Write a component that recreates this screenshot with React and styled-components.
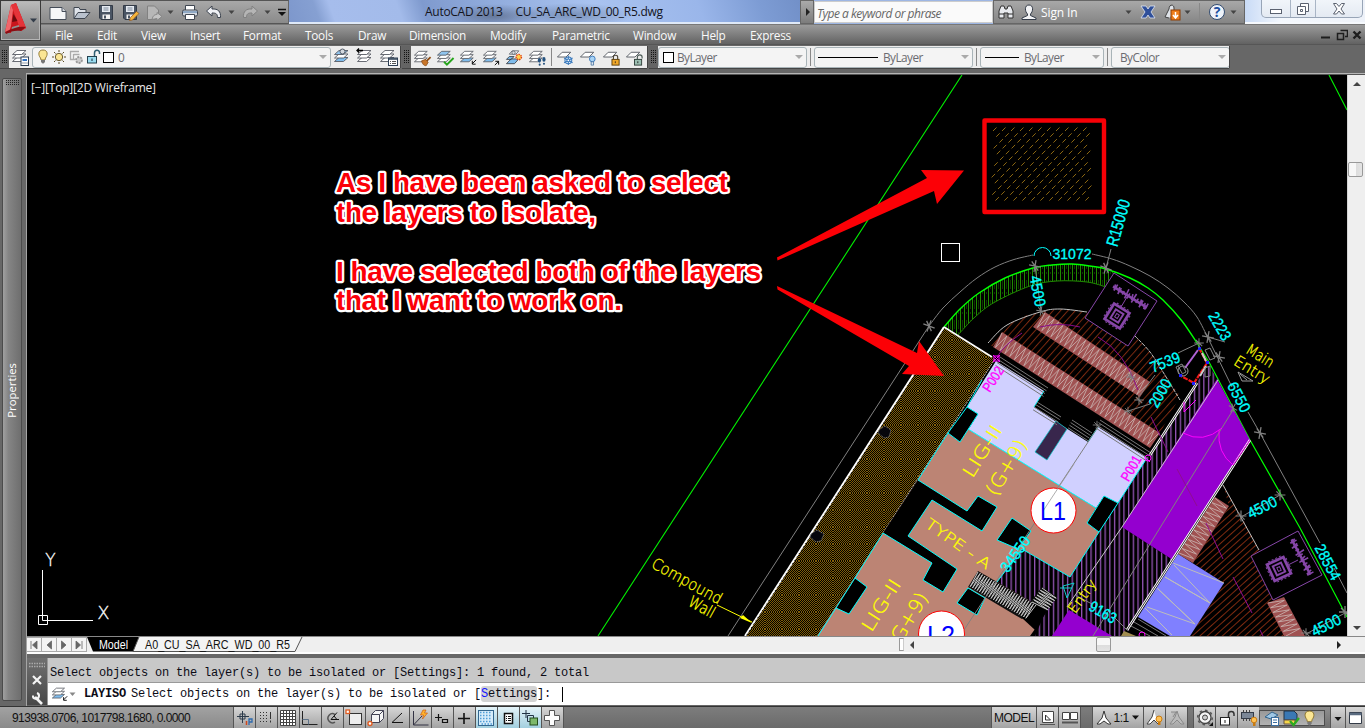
import React from "react";
import styled, { createGlobalStyle, css } from "styled-components";

const Global = createGlobalStyle`
  * { box-sizing: border-box; }
  html, body { margin: 0; padding: 0; overflow: hidden; background: #676767; }
  svg { display: block; flex: none; }
`;
const UI = `"Open Sans", "Noto Sans", sans-serif`;

const Window = styled.div`
  width: 1365px; height: 728px; display: flex; flex-direction: column;
  font-family: ${UI}; font-size: 12px; color: #222; background: #676767; overflow: hidden;
`;

/* ---------- header ---------- */
const Header = styled.header`
  height: 45px; display: grid; grid-template-columns: 41px 1fr; grid-template-rows: 24px 21px;
  background: linear-gradient(#555 24px, #9b9b9b 25px, #626262 44px, #4a4a4a 45px);
`;
const AppButton = styled.div`
  grid-row: 1 / 3; width: 41px; height: 41px; border: 1px solid #3a3a3a; box-shadow: inset 0 0 0 1px #b5b5b5;
  background: linear-gradient(#bcbcbc, #989898 50%, #808080); display: flex;
`;
const TitleBar = styled.div`display: flex; height: 24px; background: #9db6e4;`;
const QuickAccess = styled.div`
  width: 248px; height: 24px; display: flex; align-items: center; padding-left: 5px;
  background: linear-gradient(#a8a8a8, #8a8a8a); border-top: 1px solid #555; border-right: 1px solid #666; border-bottom: 1px solid #555;
`;
const Slot = styled.div`
  width: ${(p) => p.$w || 23}px; height: 100%; display: flex; align-items: center; justify-content: center; flex: none;
`;
const TitleText = styled.div`
  width: 511px; height: 24px; display: flex; align-items: center; padding-left: 136px; gap: 13px; white-space: pre;
  color: #14141c; font-size: 12px; letter-spacing: -0.28px; border-bottom: 2px solid #dfe9f8;
  background:
    radial-gradient(ellipse 50px 12px at 205px 16px, rgba(60,70,90,.5), transparent),
    radial-gradient(ellipse 60px 12px at 285px 15px, rgba(60,80,110,.4), transparent),
    linear-gradient(70deg, #7d97cc 0, #86a0d2 6%, #a6bdec 9%, #a3bbea 22%, #7f9ace 27%, #90abdc 40%, #a9c3f0 60%, #9ab6ea 80%, #7d9cd4 92%, #7290c8);
`;
const SearchToggle = styled.div`
  width: 14px; display: flex; align-items: center; justify-content: center; padding-left: 1px;
  background: linear-gradient(#aaa, #7c7c7c); border: 1px solid #666;
`;
const SearchBox = styled.div`
  width: 179px; height: 22px; margin-top: 1px; background: #fafafa; color: #666; font-style: italic; padding: 2px 0 0 2px;
  display: flex; align-items: center; letter-spacing: -0.5px; border: 1px solid #ccc; white-space: nowrap;
`;
const InfoCenter = styled.div`
  width: 252px; display: flex; align-items: center; color: #fff; background: linear-gradient(#a8a8a8, #858585);
  border: 1px solid #666; white-space: nowrap;
`;
const SignIn = styled.span`width: 82px; padding-left: 1px; letter-spacing: -0.1px; font-size: 12px; flex: none;`;
const Glass = styled.div`
  flex: 1; display: flex; padding-left: 16px; background: linear-gradient(90deg, #c9dbf6, #f4f8fd 30%, #eef2f9);
  border-bottom: 2px solid #f6f9fd;
`;
const WinControls = styled.div`
  height: 18px; display: flex; border: 1px solid #98a5b7; border-top: 0; border-radius: 0 0 5px 5px; background: linear-gradient(#f1f5fa, #e4eaf2);
`;
const WinControl = styled.div`
  width: ${(p) => p.$w}px; display: flex; align-items: center; justify-content: center;
  & + & { border-left: 1px solid #a9b5c5; }
`;
const MenuBar = styled.nav`display: flex; height: 21px; align-items: center; padding-left: 14px; gap: 24px; color: #fafafa;`;
const MenuItem = styled.span`width: ${(p) => p.$w}px; white-space: nowrap; font-size: 11.8px; letter-spacing: -0.25px;`;
const DocControls = styled.div`margin-left: auto; display: flex; padding-right: 3px; gap: 4px; align-items: center;`;

/* ---------- toolbars ---------- */
const ToolbarRow = styled.div`height: 24px; display: flex; gap: 2px; padding-top: 1px; background: #676767;`;
const Toolbar = styled.div`
  display: flex; height: 22px; background: #ededed; align-items: center; box-shadow: 0 1px 0 #444, 1px 0 0 #444;
  width: ${(p) => p.$w}px; overflow: hidden;
`;
const GripBox = styled.div`
  width: 9px; height: 22px; background: #646464; display: flex; align-items: center; justify-content: center; flex: none;
`;
const Combo = styled.div`
  height: 21px; width: ${(p) => p.$w}px; background: #f4f4f4; border: 1px solid #a9b4b8; border-radius: 3px;
  display: flex; align-items: center; padding-left: ${(p) => p.$pl ?? 5}px; color: #6b6b70; flex: none; letter-spacing: -0.55px; font-size: 11.8px;
`;
const ComboArrow = styled.i`margin: 0 3px 0 auto; border: 4px solid transparent; border-top-color: #aaa; border-bottom: 0;`;
const Swatch = styled.i`width: 11px; height: 11px; border: 1px solid #000; background: #fff; margin: 0 ${(p) => p.$mr}px 0 ${(p) => p.$ml || 0}px;`;
const LineSample = styled.i`width: ${(p) => p.$w}px; height: 1px; background: #000; margin-right: 5px;`;
const Divider = styled.i`width: 1px; height: 18px; background: #888; margin: 0 ${(p) => p.$m}px; flex: none;`;

/* ---------- body ---------- */
const Body = styled.div`flex: 1; display: flex; min-height: 0; padding-top: 4px;`;
const PaletteDock = styled.aside`width: 26px; padding: 5px 4px 5px 2px; background: #676767;`;
const Palette = styled.div`
  height: 100%; border: 1px solid #4b4b4b; border-radius: 2px; display: flex; flex-direction: column; align-items: center;
  background: linear-gradient(90deg, #a0a0a0, #858585 30%, #6e6e6e); 
`;
const PaletteLabel = styled.span`
  writing-mode: vertical-rl; transform: rotate(180deg); color: #fff; font-size: 11.3px; margin-top: 278px; width: 16px;
`;
const Main = styled.div`width: 1339px; display: flex; flex-direction: column; border-left: 1px solid #a5a5a5; border-top: 1px solid #b5b5b5; background: #676767;`;
const ViewRow = styled.div`display: flex; height: 562px; border-top: 1px solid #555;`;
const Canvas = styled.svg`width: 1320px; height: 561px; background: #000;`;
const VScroll = styled.div`
  width: 18px; height: 561px; background: #efefef; border-left: 1px solid #d5d5d5; display: flex; flex-direction: column; align-items: center;
`;
const Arrow = styled.i`
  border: 4px solid transparent;
  ${(p) => p.$d === "up" && css`border-bottom-color: #444; border-top: 0;`}
  ${(p) => p.$d === "down" && css`border-top-color: #444; border-bottom: 0;`}
  ${(p) => p.$d === "left" && css`border-right-color: #444; border-left: 0;`}
  ${(p) => p.$d === "right" && css`border-left-color: #222; border-right: 0;`}
  margin: ${(p) => p.$m || 0};
`;
const Thumb = styled.i`
  width: 15px; height: 15px; border: 1px solid #999; border-radius: 2px;
  background: linear-gradient(${(p) => (p.$v ? "90deg" : "180deg")}, #f7f7f7 50%, #dcdcdc 51%, #e4e4e4); margin: ${(p) => p.$m};
`;
const TabRow = styled.div`height: 18px; display: flex; background: #efefef; border-top: 1px solid #888; border-bottom: 2px solid #fdfdfd; align-items: stretch;`;
const TabNav = styled.div`
  width: 15px; height: 15px; border: 1px solid #aaa; border-left: 0; background: #f4f4f4; display: flex; align-items: center; justify-content: center;
`;
const TabStrip = styled.svg`width: 218px; height: 16px;`;
const HScroll = styled.div`margin-left: 594px; width: 444px; height: 15px; display: flex; align-items: center;`;
const SplitGrip = styled.i`width: 5px; height: 13px; border: 1px solid #999; border-right-color: #ccc; background: #fff; margin-right: 6px;`;

const CommandArea = styled.div`margin-top: 4px; height: 47px; display: flex; background: #fff;`;
const CommandSide = styled.div`
  width: 20px; display: flex; flex-direction: column; align-items: center; background: linear-gradient(#707070, #484848); padding-top: 4px; overflow: hidden;
`;
const CommandBody = styled.div`flex: 1; font: 12px/24px "Liberation Mono", monospace; letter-spacing: -0.2px; color: #0c0c16; white-space: pre; border-left: 1px solid #999;`;
const History = styled.div`height: 25px; background: #c8c8c8; border-bottom: 1px solid #999; padding: 3px 0 0 2px;`;
const Prompt = styled.div`height: 22px; background: #fff; display: flex; align-items: center; padding-left: 3px;`;
const Command = styled.b`margin: 0 5px 0 7px;`;
const Option = styled.span`background: #d3d3d3; border-radius: 3px; line-height: 16px; em { color: #1414ff; font-style: normal; }`;
const Caret = styled.i`width: 1px; height: 15px; background: #000; margin-left: 11px;`;

/* ---------- status bar ---------- */
const StatusBar = styled.footer`
  height: 22px; display: flex; background: linear-gradient(#909090, #6f6f6f); border-top: 1px solid #333;
  font-family: "Liberation Sans", sans-serif; color: #111;
`;
const Coords = styled.div`width: 233px; padding-left: 12px; display: flex; align-items: center; font-size: 12px; letter-spacing: -0.57px; white-space: nowrap; background: linear-gradient(#a2a2a2, #8a8a8a);`;
const StatusButton = styled.div`
  width: ${(p) => p.$w || 22}px; border-left: 1px solid #555; display: flex; align-items: center; justify-content: center; flex: none; font-size: 12px;
  letter-spacing: -0.5px;
  background: ${(p) => (p.$on ? "linear-gradient(#e4f3f8, #a2cfdf)" : "linear-gradient(#d6d6d6, #a3a3a3)")};
`;
const StatusGap = styled.div`width: ${(p) => p.$w}px; border-left: 1px solid #555; background: linear-gradient(#7d7d7d, #6a6a6a);`;
const Tray = styled.div`
  width: 66px; margin: 3px 0 2px; border: 1px solid #4d4d4d; background: linear-gradient(#999, #b2b2b2); display: flex; align-items: center; justify-content: space-around; margin-right: 5px; padding: 0 6px 0 2px;
`;

/* ---------- icons ---------- */
const I = ({ s = 20, children, w, h }) => (
  <svg width={w || s} height={h || s} viewBox={`0 0 ${w || s} ${h || s}`} fill="none">{children}</svg>
);
const Grip = () => <GripBox><I w={6} h={14}><path d="M.5 0v14M2.500 0v14M4.500 0v14" stroke="#141414" strokeDasharray="1 1" /></I></GripBox>;
const PaletteDots = () => <I w={15} h={6}><path d="M1 1.500h13M1 3.500h13M1 5.500h13" stroke="#222" strokeDasharray="1 1" /></I>;
const Caretlet = ({ c = "#444" }) => <I s={8}><path d="M0.5 2.5h6l-3 3.5z" fill={c} /></I>;
const NewIcon = () => <I><path d="M2 5.5h12l4 4V17.5H2z" fill="#f5f6f8" stroke="#444c58" /><path d="M14 5.5v4h4" stroke="#444c58" fill="#d3d7dd" /></I>;
const OpenIcon = () => <I><path d="M2 16.5V5.5h5l1 2h6v3" fill="#dfe3ea" stroke="#3f4651" /><path d="M2 16.5l4-6h12l-5 6z" fill="#b9c1cd" stroke="#3f4651" /></I>;
const SaveShape = () => <><path d="M3.500 3.500h13v14H5l-1.500-1.500z" fill="#4a5564" stroke="#333b47" /><path d="M6 4h8v6h-8z" fill="#e6ebf2" /><path d="M6.500 12.500h7.500v4.500H6.500z" fill="#f2f2f2" /><path d="M8 13.500h2v3H8z" fill="#4a5564" /><path d="M7.500 6h5M7.500 8h5" stroke="#7b8798" /></>;
const SaveIcon = () => <I><SaveShape /></I>;
const SaveAsIcon = () => <I><SaveShape /><path d="M9.500 18.500l1-3 6-6 2.500 2-6.500 6.500z" fill="#f5b53c" stroke="#91541a" strokeWidth=".7" /></I>;
const ExportIcon = () => <I><path d="M3.5 4h7l4 4v6h-3v3.5h-8z" fill="#b7b7b7" stroke="#818181" /><path d="M8 17.5c1-5 4-5 5-5v-2l5 4-5 4v-2z" fill="#c4c4c4" stroke="#858585" /></I>;
const PrintIcon = () => <I><path d="M5.5 8V3.5h9V8" fill="#fff" stroke="#3f4651" /><rect x="2.5" y="8" width="15" height="6" rx="1.5" fill="#d5dae2" stroke="#3f4651" /><path d="M5.500 12.500h9v5h-9z" fill="#fff" stroke="#3f4651" /><path d="M3 10h14" stroke="#4b78a8" /></I>;
const UndoIcon = ({ dim }) => (
  <I><g transform={dim ? "translate(20 0) scale(-1 1)" : ""}><path d="M2.500 9L8 4v3c6-.5 9 2.500 8.500 8.500h-3C13.500 12 12 10.800 8 11v3z" fill={dim ? "#b5b5b5" : "#eef0f4"} stroke={dim ? "#808080" : "#3c434e"} /></g></I>
);
const MoreIcon = () => <I s={12}><path d="M2 3.500h8" stroke="#111" strokeWidth="1.500" /><path d="M2 6h8l-4 4z" fill="#111" /></I>;

const Sheets = ({ top = "#fff", low = "#fff" }) => (
  <g stroke="#5a5e66" strokeWidth=".9">
    <path d="M1.500 14.500L6 10.500h9L10.500 14.500z" fill={low} />
    <path d="M1.500 11L6 7h9L10.500 11z" fill="#fff" />
    <path d="M1.500 7.500L6 3.500h9L10.500 7.500z" fill={top} />
  </g>
);
const One = () => <path d="M1.500 9.500L6.500 4.500h9L10.500 9.500z" fill="#fff" stroke="#5a5e66" />;
const LayerIcon = ({ kind, s = 20 }) => (
  <svg width={s} height={s} viewBox="0 0 20 20" fill="none">
    {["frz", "off", "lock", "unlock"].includes(kind) ? <One /> : kind !== "merge" && <Sheets top={kind === "check" || kind === "cur" ? "#8fc4ee" : "#fff"} low={["iso", "uniso", "cur"].includes(kind) ? "#7fbcec" : "#fff"} />}
    {kind === "props" && <g><rect x="10" y="10" width="7.500" height="8.500" fill="#fff" stroke="#2d3f55" /><path d="M11.500 12h4.500v2h-4.500z" fill="#2f72c4" /><path d="M11.500 16h5" stroke="#2d3f55" strokeDasharray="1 1" /></g>}
    {kind === "state" && <g><rect x="9.500" y="11" width="9" height="7.500" fill="#fff" stroke="#2d3f55" /><path d="M9.500 12h9" stroke="#2d3f55" strokeWidth="1.500" /><path d="M11 14.500h1m1 0h4M11 16.500h1m1 0h4" stroke="#555" /></g>}
    {kind === "cur" && <circle cx="9.500" cy="4.500" r="2.500" fill="#d5d9df" stroke="#555d68" />}
    {kind === "prev" && <path d="M7 3.500H1m2-2L1 3.500l2 2" stroke="#000" strokeWidth="1.300" />}
    {kind === "match" && <g><path d="M18.500 9.500l-4 4" stroke="#8d4a10" strokeWidth="1.800" /><path d="M9 13.500l4-1.500 3 3-2 3.500c-2 .5-4-1-5-5z" fill="#c8762a" stroke="#7c400d" strokeWidth=".7" /></g>}
    {kind === "check" && <path d="M8.500 14.500l3 3L18.500 10.500" stroke="#27a51c" strokeWidth="2" />}
    {kind === "iso" && <path d="M18 12.500l-4 4m0-3v3.500h3.500" stroke="#000" strokeWidth="1" />}
    {kind === "uniso" && <path d="M13.500 18l4-4m-3.500 0h3.500v3.500" stroke="#000" strokeWidth="1" />}
    {kind === "merge" && <g><path d="M1.500 16.500l5-5h8l-4.500 5zM1.500 12l3-3h5l-3 3z" fill="#7fbcec" stroke="#3c4046" strokeWidth=".9" /><path d="M4.500 6.500l3-3.500h7l-3 3.500z" fill="#fff" stroke="#5a5e66" strokeWidth=".9" /><circle cx="9" cy="5" r="1.800" fill="#d5d9df" stroke="#555d68" strokeWidth=".8" /><circle cx="14.500" cy="9.500" r="2.800" fill="#ffd34d" stroke="#e0391b" strokeWidth="1.500" strokeDasharray="1.500 1" /></g>}
    {kind === "walk" && <g fill="#24527f"><ellipse cx="12" cy="13" rx="1.700" ry="2.600" /><ellipse cx="16.800" cy="12" rx="1.700" ry="2.600" /><circle cx="12.300" cy="17.500" r="1.100" /><circle cx="16.800" cy="16.500" r="1.100" /></g>}
    {kind === "frz" && <g stroke="#3d7bbd" strokeWidth="1.100"><circle cx="13" cy="13" r="3.600" fill="#dff0fd" /><path d="M13 8v10M8.500 10.500l9 5M17.500 10.500l-9 5" /><circle cx="13" cy="13" r="1.500" fill="#fff" /></g>}
    {kind === "off" && <g><circle cx="14" cy="11.500" r="3" fill="#a9d3f5" stroke="#3d7bbd" /><path d="M12.800 14.500h2.500v3.500h-2.500z" fill="#dfe9f3" stroke="#3d6d9d" strokeWidth=".8" /></g>}
    {kind === "lock" && <g><path d="M12 12v-2.500c0-2.500 4.500-2.500 4.500 0V12" stroke="#4b4335" strokeWidth="1.200" /><rect x="10.500" y="12" width="7.500" height="6" fill="#f1a92a" stroke="#60410d" /><path d="M14 14v2" stroke="#432" /></g>}
    {kind === "unlock" && <g><path d="M13 12V9.500c0-3 5-3 5 0V11" stroke="#4d5c57" strokeWidth="1.200" /><rect x="10" y="12" width="7.500" height="6" fill="#9cbfb2" stroke="#33423d" /><path d="M13.500 14v2" stroke="#222" /></g>}
  </svg>
);
const BulbIcon = ({ s = 16 }) => <svg width={s} height={s} viewBox="0 0 16 16"><path d="M8 1C3 1 3 6 5.500 9l.5 2h4l.5-2C13 6 13 1 8 1z" fill="#fbe694" stroke="#8b722b" strokeWidth=".9" /><path d="M6 11h4v2l-1.500 1.500h-1L6 13z" fill="#777" /></svg>;
const SunIcon = () => <I s={16}><circle cx="8" cy="8" r="3.700" fill="#fbe694" stroke="#5a4b22" strokeWidth=".9" /><path d="M8 1v2M8 13v2M1 8h2M13 8h2M3 3l1.500 1.500M11.500 11.500L13 13M13 3l-1.500 1.500M4.500 11.500L3 13" stroke="#5a4b22" /></I>;
const VpFreeze = () => <I s={16}><path d="M2 2.500h9M2.500 2v9M5.500 5.500h6M5.500 5v6M2 10.500h5" stroke="#aaa" strokeWidth="1.300" /><circle cx="11" cy="11" r="3" fill="#ccc" stroke="#999" strokeDasharray="2 1" strokeWidth="1.800" /></I>;
const OpenLock = () => <I s={16}><path d="M8.500 7V4c0-3.500 5-3.500 5-.5V5" stroke="#2f5f73" strokeWidth="1.500" /><rect x="1.500" y="7.500" width="9" height="6.500" fill="#9adcf0" stroke="#24424f" /><path d="M6 9.500v2.500" stroke="#123" /></I>;

const statusIcons = [
  <g><path d="M8.500 3v12M3 8.500h12M6 6h5v5H6z" stroke="#2c3b4a" /><path d="M12.500 17v-4" stroke="#d0471c" strokeWidth="1.500" /><path d="M15 17v-6h3v3h-3" stroke="#2d69ad" strokeWidth="1.300" /></g>,
  <g><path d="M4 4.500h8M4 7.500h8M4 10.500h8M4 13.500h8" stroke="#333" strokeDasharray="1 2" /><path d="M14.500 4v7M14.500 12.500v2" stroke="#333" /></g>,
  <g><rect x="2.500" y="2.500" width="15" height="15" fill="#fff" /><path d="M2.500 5.500h15M2.500 8.500h15M2.500 11.500h15M2.500 14.500h15M5.500 2.500v15M8.500 2.500v15M11.500 2.500v15M14.500 2.500v15M2.500 2.500h15v15h-15z" stroke="#444" /></g>,
  <g><path d="M2.500 3v13.500h15" stroke="#222" /><path d="M2.500 11.500h6v5" stroke="#5f7389" /></g>,
  <g><path d="M13 6.500A4.500 4.500 0 1 0 13 14" stroke="#555" strokeWidth="1.500" /><path d="M15 4.500l-6 7h8M12 8l2.500 3" stroke="#111" /></g>,
  <g><rect x="5.500" y="5.500" width="12" height="11" fill="#eee" stroke="#333" /><rect x="2" y="2" width="3.500" height="3.500" fill="#fff" stroke="#e05d22" strokeWidth="1.300" /></g>,
  <g><path d="M5.500 6.500l4-4h8v8l-4 4h-8z" fill="#f5f5f5" stroke="#445" /><path d="M5.500 6.500h8v8M13.500 6.500l4-4" stroke="#445" /><circle cx="4" cy="15.500" r="2" fill="#fff" stroke="#e05d22" strokeWidth="1.400" /></g>,
  <path d="M14 5L4 14.500h11" stroke="#111" />,
  <g><path d="M3.500 3v14h15M3.500 17L12 8" stroke="#334" /><path d="M13 2l-2.500 5h3l-1 4 5-6h-3l1.500-3z" fill="#ffb42d" stroke="#cc5b12" strokeWidth=".7" /></g>,
  <path d="M3 9.500h7M6.500 6v7M10.500 11.500h5v3h-5z" stroke="#111" strokeWidth="1.200" />,
  <path d="M4 10.500h12M10 5v11" stroke="#111" strokeWidth="1.600" />,
  <g><rect x="2.500" y="2.500" width="15" height="15" fill="#d7ecfa" stroke="#33678f" /><path d="M4 4.500h12M4 7.500h12M4 10.500h12M4 13.500h12M5.500 16h11" stroke="#4f9dd7" strokeWidth="1.500" strokeDasharray="1.500 1.500" /></g>,
  <g><rect x="6.500" y="5.500" width="8" height="10" fill="#fff" stroke="#111" strokeWidth="1.500" /><path d="M8 8.500h1m1 0h3M8 10.500h1m1 0h3M8 12.500h1m1 0h3" stroke="#111" /></g>,
  <g><path d="M2 5.500h8M6 2v8M7.500 7.500h6v6h-6z" stroke="#234" /><rect x="10" y="10" width="7.500" height="7" fill="#7db86a" stroke="#234d1c" /></g>,
  <path d="M7.500 2.500h5v5h5v5h-5v5h-5v-5h-5v-5h5z" fill="#fdfdfd" stroke="#555" />,
];

/* ---------- drawing ---------- */
const curve = (pts) => {
  let d = `M${pts[0]}`;
  for (let i = 0; i < pts.length - 1; i++) {
    const a = pts[i - 1] || pts[i], b = pts[i], c = pts[i + 1], e = pts[i + 2] || c;
    d += `C${b[0] + (c[0] - a[0]) / 6} ${b[1] + (c[1] - a[1]) / 6} ${c[0] - (e[0] - b[0]) / 6} ${c[1] - (e[1] - b[1]) / 6} ${c[0]} ${c[1]}`;
  }
  return d;
};
const Cad = styled.text`
  font-family: "Liberation Sans", sans-serif; fill: ${(p) => p.$c || "#0ff"}; stroke: ${(p) => p.$c || "#0ff"}; stroke-width: 0.35px;
  text-anchor: middle; dominant-baseline: central;
`;
const CadLabel = styled(Cad)`font-family: "DejaVu Sans", sans-serif; font-weight: 200; stroke-width: 0.3px;`;
const BlockLabel = styled(Cad)`stroke: none;`;
const Note = styled.text`
  font: bold 28px "Liberation Sans", sans-serif; fill: #fb0008; stroke: #fff; stroke-width: 4.400px; stroke-linejoin: round; paint-order: stroke;
`;
const T = ({ x, y, r = 0, len, s = 15.5, c, label, block, children }) => {
  const C = label ? CadLabel : block ? BlockLabel : Cad;
  return <C $c={c} transform={`translate(${x} ${y}) rotate(${r})`} fontSize={s} textLength={len} lengthAdjust="spacingAndGlyphs">{children}</C>;
};
const Tick = ({ x, y, r = 0, k = 1 }) => <path transform={`translate(${x} ${y}) rotate(${r}) scale(${k})`} d="M-6 0H6M0-6V6M-4-4L4 4" stroke="#808080" strokeWidth="1.300" />;
const outer = [[944, 327], [960, 309], [979, 293], [1005, 278], [1033, 268], [1052, 265], [1072, 264], [1090, 266], [1106, 269], [1130, 278], [1148, 288], [1163, 300], [1182, 321], [1197, 343]];
const inner = [[1106, 287], [1087, 282], [1057, 281], [1030, 286], [995, 302], [975, 317], [958, 335]];
const Emblem = ({ x, y, r }) => (
  <g transform={`translate(${x} ${y}) rotate(${r})`} stroke="#8646a8" fill="none">
    <rect x="-9" y="-9" width="18" height="18" strokeWidth="2.800" /><rect x="-4.500" y="-5" width="9" height="10" strokeWidth="2" /><rect x="-1.500" y="-2" width="3" height="4" />
    <path d="M-11-7v14M-7-11h14M11-7v14M-7 11h14" strokeDasharray="2 2" />
  </g>
);
const Spine = ({ x, y, r }) => (
  <g transform={`translate(${x} ${y}) rotate(${r})`} stroke="#8646a8" fill="none">
    <path d="M-20 0H20" strokeWidth="2.500" />
    <path d="M-19-3l2 6M-17-4v7M-14-3l2 6M-12-3v7M-8-2v4M-5-6l1 10M-2-3v6M1-4l2 6M4-6v10M8-3v5M11-4l2 7M13-4v8M16-3l2 6M19-4v7" strokeWidth="1.600" />
  </g>
);
const hatch = [];
for (let r = 0; r < 13; r++) for (let c = -1; c < 12; c++) {
  const x = 993 + c * 9 + ((r * 3.2) % 9), y = 131 + r * 5.8;
  if (x > 991 && x < 1089) hatch.push(`M${x.toFixed(1)} ${y.toFixed(1)}l3.500-3.500`);
}
const steps = (x, y, dx, dy, n, sx, sy) => Array.from({ length: n }, (_, i) => `M${x + sx * i} ${y + sy * i}l${dx} ${dy}`).join("");
const zig = (x1, y1, x2, y2, wx, wy, n) => {
  let d = "";
  for (let i = 0; i <= n; i++) {
    const t = i / n, x = x1 + (x2 - x1) * t, y = y1 + (y2 - y1) * t;
    d += `${i ? "L" : "M"}${(x + (i % 2 ? wx : 0)).toFixed(1)} ${(y + (i % 2 ? wy : 0)).toFixed(1)}`;
  }
  return d;
};
/* earth fill: 1px dots, with the lattice shifted by one from each 17px tile to the next */
const TILE = 17;
const dots = (x0, y0) => {
  let d = "";
  for (let y = 0; y < TILE; y++) for (let x = 0; x < TILE; x++) if ((x + y) % 2 === 0) d += `M${x0 + x} ${y0 + y}h1v1h-1z`;
  return d;
};
const earth = dots(0, 0) + dots(TILE, TILE) + dots(TILE, 0) + dots(0, TILE);

const Drawing = () => (
  <Canvas viewBox="27 75 1320 561" fill="none">
    <defs>
      <pattern id="soil" width={TILE * 2} height={TILE * 2} patternUnits="userSpaceOnUse">
        <rect width={TILE * 2} height={TILE * 2} fill="#000" /><path d={earth} fill="#815d06" shapeRendering="crispEdges" />
      </pattern>
      <pattern id="grass" width="4" height="20" patternUnits="userSpaceOnUse"><path d="M.5 0v20" stroke="#1f8a00" /><path d="M2.500 0v9M2.500 12v2" stroke="#124d00" strokeWidth=".7" /></pattern>
      <pattern id="drive" width="4.700" height="10" patternUnits="userSpaceOnUse"><path d="M.7 0v10" stroke="#b063d6" strokeWidth="1.100" /></pattern>
      <pattern id="red1" width="5.500" height="10" patternUnits="userSpaceOnUse" patternTransform="rotate(42)"><path d="M.5 0v10" stroke="#7d2a10" /></pattern>
      <pattern id="red2" width="5" height="10" patternUnits="userSpaceOnUse" patternTransform="rotate(48)"><path d="M.5 0v10" stroke="#7d2a10" /></pattern>
    </defs>

    <path d="M962 75L598 636M1329 75L1347 110" stroke="#00f000" strokeWidth="1.100" />
    <path d={hatch.join("")} stroke="#9c7414" strokeWidth=".9" />

    <path d={curve([[929, 326], [943, 308], [960, 292], [977, 278], [995, 267], [1014, 259.500], [1033, 255]])} stroke="#808080" />
    <path d={curve([[1092, 254], [1112, 259], [1130, 266], [1150, 276], [1168, 288], [1184, 302], [1197, 317], [1208, 338]]) + "L1232 387M1248 412L1260 433L1320 543M1334 568L1347 593"} stroke="#808080" />
    <path d="M929 326L728 636" stroke="#808080" />

    <path d={`${curve(outer.slice(0, 9))}L1113 272L1106 287${curve(inner).replace("M1106,287", "")}Z`} fill="url(#grass)" />
    <path d={curve(inner)} stroke="#208a00" />
    <path d={curve(outer)} stroke="#00ff00" strokeWidth="1.400" />
    <path d="M1197 343L1209 362L1250 440L1300 528L1347 617" stroke="#00ff00" strokeWidth="1.200" />

    <path d="M988 343L1007 325L1024 316L1040 312L1060 309L1087 312L1135 336L1150 352L1180 396L1160 433L1002 332L993 347Z" fill="url(#red1)" />
    <path d={curve([[988, 343], [1007, 325], [1040, 312], [1060, 309], [1087, 312]])} stroke="#c0c0c0" />
    <path d={curve([[1135, 336], [1150, 352], [1163, 372], [1180, 400]])} stroke="#c0c0c0" strokeDasharray="4 1" />
    <path d="M1223 485L1242 517L1259 550L1273 600L1284 636H1190L1224 583L1193 563L1229 506Z" fill="url(#red2)" />
    <path d="M1223 485L1259 550" stroke="#c0c0c0" />

    <path d="M1045 312L1150 382L1140 397L1033 327ZM1002 332L1160 433L1150 448L993 347ZM1215 497L1229 506L1193 563L1178 554ZM1267 603L1284 597L1305 636H1284Z" fill="#a05252" />
    <path d={zig(1045, 313, 1149, 383, -10, 13, 46) + zig(1002, 333, 1159, 433, -9, 13, 66) + zig(1215, 498, 1179, 553, 13, 8, 24) + zig(1268, 603, 1286, 636, 15, -5, 14)} stroke="#cbb9b5" strokeWidth=".8" />
    <path d="M1040 327Q1060 322 1080 327M1098 337Q1125 352 1138 390M1022 333Q1004 345 997 357" stroke="#8a0a8a" />

    <path d="M1114 273L1157 301L1128 346L1085 318Z" fill="#000" stroke="#8646a8" />
    <Emblem x={1117} y={316} r={32} /><Spine x={1130} y={297} r={32} /><path d="M1121 307L1127 297" stroke="#8646a8" />
    <path d="M1251 556L1298 531L1322 575L1273 600Z" fill="#000" stroke="#8646a8" />
    <Emblem x={1279} y={569} r={-25} /><Spine x={1301} y={557} r={62} /><path d="M1288 565L1298 560" stroke="#8646a8" />

    <path d="M944 327L995 359L883 533L817 636H746Z" fill="url(#soil)" />
    <path d="M944 327L745 636" stroke="#fff" strokeWidth="2" /><path d="M945 328L746 636" stroke="#000" strokeDasharray="1 3" />
    <path d="M944 327L992 357" stroke="#fff" strokeWidth="1.600" />
    <path d="M879 430l6-4 6 4-2 7-5 1-6-5zM811 534l6-4 7 4-3 7-5 1-6-5z" fill="#06060c" stroke="#888" strokeDasharray="1 1" />
    <path d="M995 359L883 533" stroke="#bbb" strokeDasharray="2 1" />

    <path d="M1209 366L1218 380L1122 527L1173 560L1125 636H1035L1045 613L997 582L1022 549L1070 577L1147 458L1197 382Z" fill="url(#drive)" />
    <path d="M996 361L1044 391L1034 407L1058 423L1088 442L1098 427L1147 458L1118 503L1104 496L1096 508L968 430L978 414L967 407Z" fill="#d0d0ff" />
    <path d="M948 433L960 442L968 429L1096 508L1087 523L1099 532L1070 577L1022 549L997 582L1037 605L1035 629L1030 636H817L883 533L918 480Z" fill="#bc8474" />
    <g fill="#000" stroke="#0ff">
      <path d="M967 407L978 414L960 442L948 433Z" />
      <path d="M883 533L932 563L923 580L943 592L957 569L908 536L932 500L982 531L997 507L978 496L967 511L918 480" />
      <path d="M855 578L867 587L849 614L836 608Z" /><path d="M1012 518L1031 531L1018 549L997 540Z" />
      <path d="M968 588L985 598L977 615L957 603Z" /><path d="M1104 496L1118 503L1099 532L1087 523Z" />
    </g>
    <path d="M948 433L918 480M883 533L855 578M836 608L818 636M968 429L1096 508M1099 532L1070 577L1022 549L997 582M1147 458L1118 503M982 380L967 407M1044 391L1034 407M1088 442L1098 427" stroke="#0ff" />
    <path d="M1056 421L1067 429L1047 460L1035 452Z" fill="#38264c" stroke="#0cc" strokeWidth=".7" />
    <path d={steps(1000, 357, 48, 31, 4, -1.500, 2.800) + steps(1100, 420, 51, 33, 4, -1.500, 2.600) + steps(1037, 402, 24, 15, 4, -1.300, 2.600) + steps(1072, 420, 20, 13, 4, -1.300, 2.600)} stroke="#777" />
    <path d="M978 571L1037 605L1022 619L968 587ZM1042 587L1057 597L1045 613L1030 602Z" fill="#111" />
    <path d="M1033 603L1047 611L1035 630L1022 618Z" fill="#000" />
    <path d={zig(978, 572, 1036, 605, -9, 14, 50) + zig(1042, 588, 1032, 602, 15, 9, 12)} stroke="#c8c8c8" />
    <path d="M1098 427L960 636" stroke="#808080" />

    <path d="M1217 379L1250 440L1173 560L1122 527Z" fill="#9400cf" />
    <path d="M1069 610L1112 636H1052Z" fill="#9400cf" />
    <path d="M1233 410L1093 636" stroke="#808080" />
    <path d="M1178 554L1224 583L1190 636H1170L1138 617Z" fill="#8080ff" />
    <path d="M1173 563L1224 583M1174 565L1210 603L1165 577M1157 588L1195 624L1147 607M1145 608L1172 635M1165 577L1210 603M1157 588L1195 624" stroke="#bdbdbd" />
    <path d="M1138 619L1166 636M1134 622L1158 636M1131 626L1150 636" stroke="#777" />
    <path d="M1124 631l12 5h-15z" fill="#a08c50" /><circle cx="1142" cy="635" r="3" stroke="#f0f" />
    <path d="M1250 440L1127 630M1197 383L1150 455" stroke="#fff" strokeWidth="2.600" /><path d="M1250 440L1127 630M1197 383L1150 455" stroke="#000" strokeWidth=".8" />
    <path d="M1122 527L1067 607M1218 380L1122 527" stroke="#c8c8c8" />
    <path d="M1183 433Q1203 444 1222 428M1219 430Q1217 453 1233 465M1250 440L1233 465M1184 402v10l12-12M1146 458l4 4" stroke="#f0f" />
    <circle cx="1148" cy="458" r="3" stroke="#f0f" /><path d="M994 356h5v5h-5zM993 355l7 7m0-7l-7 7" stroke="#f0f" />
    <path d="M1151 417L1168 452M1177 469L1197 506M1206 523L1223 559M1233 577L1252 613M1260 630l3 6" stroke="#900d90" />

    <path d="M1199 348L1207 363L1194 383L1181 376" stroke="#f01818" strokeWidth="2.200" strokeDasharray="5 1" />
    <path d="M1202 353L1206 361M1206 366L1200 376" stroke="#ccc" strokeWidth="2" />
    <path d="M1198 350L1185 368" stroke="#b063d6" strokeWidth="2" /><circle cx="1183" cy="371" r="5" stroke="#999" />
    <path d="M1176 367l6-3 4 8-6 3zM1178 366l4 7M1205 350l5-2 5 10-5 2zM1205 368l5-2v10l-5 1z" stroke="#888" />
    <path d="M1198 347h3v3h-3zM1206 361h3v3h-3zM1192 382h3v3h-3zM1179 374h3v3h-3z" fill="#2020ff" />
    <path d="M1238 372L1253 381H1242ZM1240 374l7 6" stroke="#999" /><path d="M1063 586L1074 583L1067 598ZM1060 588h12" stroke="#1cc" />
    <path d="M1106 268L1111 249M1041 311L1035 266M1199 343L1178 353M1140 395L1155 375M1125 412L1150 404M1241 517L1280 495M1306 634L1345 613M1208 337L1225 342M1092 604L1075 595M1115 618L1127 630" stroke="#808080" />
    {[[929, 326, 20], [1035, 266, 10], [1041, 311, 10, 0.8], [1106, 268, 20], [1199, 343, 0, 0.8], [1208, 337, 10], [1219, 357, 10], [1233, 408, 30, 0.8], [1260, 433, 10], [1280, 495, 0, 0.9], [1241, 516, 0, 0.9], [1345, 612], [1306, 633, 0, 0.8], [1097, 425, 0, 0.7], [1131, 377, 0, 0.8], [1139, 400, 0, 0.8], [1128, 411, 0, 0.7]].map(([x, y, r, k], i) => <Tick key={i} x={x} y={y} r={r} k={k} />)}

    <path d="M1034 256A8 8 0 0 1 1051 256" stroke="#0ff" />
    <T x={1072} y={253.500} len={39}>31072</T>
    <T x={1118.500} y={223} r={-74} len={48} s={17}>R15000</T>
    <T x={1038} y={291} r={79} len={31}>4500</T>
    <T x={1220} y={326} r={60} len={30}>2223</T>
    <T x={1165} y={362} r={-22} len={31}>7539</T>
    <T x={1160} y={393} r={-60} len={30}>2000</T>
    <T x={1239} y={397} r={62} len={32}>6550</T>
    <T x={1262} y={507} r={-27} len={31}>4500</T>
    <T x={1328} y={562} r={62} len={38}>28554</T>
    <T x={1326} y={625} r={-27} len={31}>4500</T>
    <T x={1103} y={612} r={30} len={29}>9163</T>
    <T x={1015} y={554} r={-55} len={40}>34550</T>
    <T x={993} y={379} r={-57} len={27} s={14} c="#f0f">P002</T>
    <T x={1131} y={468} r={-60} len={27} s={14} c="#f0f">P001</T>
    <T label x={1260} y={356} r={32} len={30} c="#ff0">Main</T>
    <T label x={1252} y={370} r={32} len={39} c="#ff0">Entry</T>
    <T label x={1082} y={596} r={-54} len={38} s={14} c="#ff0">Entry</T>
    <T label x={687} y={581} r={29} len={78} s={16} c="#ff0">Compound</T>
    <T label x={702} y={607} r={29} len={28} s={16} c="#ff0">Wall</T>
    <path d="M717 605L752 622" stroke="#ff0" /><path d="M740 618l3-3 9 8z" fill="#ff0" />
    <T label x={982} y={451} r={-58} len={58} s={18} c="#ff0">LIG-II</T>
    <T label x={1006} y={467} r={-59} len={62} s={19} c="#ff0">(G+9)</T>
    <T label x={881} y={605} r={-58} len={58} s={18} c="#ff0">LIG-II</T>
    <T label x={907} y={620} r={-59} len={62} s={19} c="#ff0">(G+9)</T>
    <T label x={958} y={544} r={35} len={76} s={15} c="#ff0">TYPE - A</T>
    <circle cx="1053.500" cy="510.500" r="22.500" fill="#fff" stroke="#f00" /><circle cx="941.500" cy="634" r="23" fill="#fff" stroke="#f00" />
    <path d="M1074 464L1043 511" stroke="#999" strokeWidth=".8" />
    <T block x={1053} y={511} len={26} s={25} c="#00f">L1</T><T block x={941} y={635} len={28} s={25} c="#00f">L2</T>

    <rect x="984.500" y="120.500" width="119.500" height="91.500" stroke="#f80006" strokeWidth="4.400" strokeLinejoin="round" />
    <rect x="941.500" y="243.500" width="18" height="18" stroke="#fff" />
    <path d="M777 257.500L927 178L921 170L964 170.500L937 204L934 191L777.500 260.500ZM777 286L917 353L919 341L944 376L902 374L909 366L777.500 289.500Z" fill="#fc0006" />
    <Note x="336" y="192" textLength="392">As I have been asked to select</Note>
    <Note x="336" y="221.500" textLength="260">the layers to isolate,</Note>
    <Note x="336" y="280.500" textLength="425">I have selected both of the layers</Note>
    <Note x="336" y="309.500" textLength="286">that I want to work on.</Note>

    <path d="M42.500 570V620.500H93M38.500 615.500h9v9h-9z" stroke="#fff" />
    <T label x={50.500} y={559.500} s={17} c="#fff">Y</T><T label x={103.500} y={612.500} s={18} c="#fff">X</T>
    <text x="31" y="92" fontFamily={UI} fontSize="12" fontWeight="500" fill="#e8e8e8" textLength="125">[−][Top][2D Wireframe]</text>
  </Canvas>
);

const menus = [["File", 18], ["Edit", 20], ["View", 25], ["Insert", 29], ["Format", 38], ["Tools", 29], ["Draw", 27], ["Dimension", 57], ["Modify", 38], ["Parametric", 57], ["Window", 44], ["Help", 25], ["Express", 38]];

export default function App() {
  return (
    <Window>
      <Global />
      <Header>
        <AppButton>
          <svg width="39" height="39" viewBox="0 0 39 39">
            <path d="M4 31L10 4l5-2 10 25-5 3-2-6-7 2-1 6z" fill="#c9151c" />
            <path d="M10 4l5-2 10 25-5 3L12 9z" fill="#e5343a" /><path d="M11 21l1.500-8 4 7z" fill="#6d0a0e" />
            <path d="M4 31l6-27 2 5-2 16-2 6z" fill="#f0666a" /><path d="M4 31c8-4 14-6 21-5l-5 4c-5-1-10 0-15 3z" fill="#8d0d13" />
            <path d="M29 17.500h7l-3.500 4z" fill="#333d4a" />
          </svg>
        </AppButton>
        <TitleBar>
          <QuickAccess>
            <Slot $w={24}><NewIcon /></Slot><Slot $w={24}><OpenIcon /></Slot><Slot $w={24}><SaveIcon /></Slot><Slot $w={24}><SaveAsIcon /></Slot><Slot $w={24}><ExportIcon /></Slot>
            <Slot $w={9}><Caretlet /></Slot><Slot $w={29}><PrintIcon /></Slot><Slot $w={20}><UndoIcon /></Slot><Slot $w={16}><Caretlet /></Slot>
            <Slot $w={20}><UndoIcon dim /></Slot><Slot $w={16}><Caretlet /></Slot><Slot $w={12}><MoreIcon /></Slot>
          </QuickAccess>
          <TitleText><span>AutoCAD 2013</span><span>CU_SA_ARC_WD_00_R5.dwg</span></TitleText>
          <SearchToggle><Arrow $d="right" /></SearchToggle>
          <SearchBox>Type a keyword or phrase</SearchBox>
          <InfoCenter>
            <Slot $w={23}><I><path d="M3 16V9l2-5h3l1 3h2l1-3h3l2 5v7h-5v-5H8v5z" fill="#e8eaee" stroke="#333" /><path d="M3 12h5M12 12h5" stroke="#333" /></I></Slot>
            <Slot $w={23}><I><path d="M10 3c-5 0-4 7-1.500 9v1.500L3 16v1.500h14V16l-5.500-2.500V12c2.500-2 3.500-9-1.500-9z" fill="#f2f3f5" stroke="#333b48" /></I></Slot>
            <SignIn>Sign In</SignIn>
            <Slot $w={14}><Caretlet /></Slot>
            <Slot $w={24}><I s={17}><path d="M1 2h5l2 3 2-3h5l-4 6 4 6h-5l-2-3-2 3H1l4-6z" fill="#2f4f9a" stroke="#dfe6f2" strokeWidth=".8" /></I></Slot>
            <Slot $w={24}><I><path d="M7 16l-4-1 4-8c0-5 5-5 5-1v5" fill="#dfe3e9" stroke="#444" /><rect x="9" y="8" width="9" height="10" fill="#ee7d1a" stroke="#8d3e05" /><path d="M13.500 10v5m-2.500-2l2.500 3 2.500-3" stroke="#fff" strokeWidth="1.500" /></I></Slot>
            <Slot $w={8}><Caretlet /></Slot>
            <Divider $m={7} />
            <Slot $w={19}><I s={18}><circle cx="9" cy="9" r="7.500" fill="#eef3fa" stroke="#334c70" /><text x="9" y="14" textAnchor="middle" fontSize="14" fontWeight="700" fill="#1f4fa0">?</text></I></Slot>
            <Slot $w={16}><Caretlet /></Slot>
          </InfoCenter>
          <Glass>
            <WinControls>
              <WinControl $w={28}><I s={14}><rect x="1.500" y="7.500" width="11" height="4" fill="#fff" stroke="#5b6270" /></I></WinControl>
              <WinControl $w={25}><I s={14}><path d="M4.500 1.500h8v8h-8z" fill="#fff" stroke="#5b6270" /><path d="M1.500 4.500h8v8h-8z" fill="#fff" stroke="#5b6270" /><path d="M4.500 7.500h2v2h-2z" stroke="#5b6270" /></I></WinControl>
              <WinControl $w={47}><I s={14}><path d="M1.500 1.500h3L7 4.500l2.500-3h3L9 7l3.500 5h-3L7 9l-2.500 3h-3L5 7z" fill="#fff" stroke="#5b6270" /></I></WinControl>
            </WinControls>
          </Glass>
        </TitleBar>
        <MenuBar>
          {menus.map(([m, w]) => <MenuItem key={m} $w={w}>{m}</MenuItem>)}
          <DocControls>
            <I s={12}><path d="M1 8.500h9" stroke="#1e1e1e" strokeWidth="2" /></I>
            <I s={12}><path d="M4.500 1.500h7v6H9M1.500 4.500h6v6h-6z" stroke="#1e1e1e" strokeWidth="1.500" /></I>
            <I s={10}><path d="M1.500 1.500l7 7m0-7l-7 7" stroke="#1e1e1e" strokeWidth="2.400" /></I>
          </DocControls>
        </MenuBar>
      </Header>

      <ToolbarRow>
        <Toolbar $w={400}>
          <Grip /><Slot><LayerIcon kind="props" /></Slot>
          <Combo $w={299} $pl={2}>
            <BulbIcon /><SunIcon /><Slot $w={18}><VpFreeze /></Slot><Slot $w={18}><OpenLock /></Slot><Swatch $mr={4} $ml={0} /><span>0</span><ComboArrow />
          </Combo>
          <Slot><LayerIcon kind="cur" /></Slot><Slot><LayerIcon kind="prev" /></Slot><Slot><LayerIcon kind="state" /></Slot>
        </Toolbar>
        <Toolbar $w={245}>
          <Grip />
          {["match", "check", "iso", "uniso", "merge", "walk"].map((k) => <Slot key={k}><LayerIcon kind={k} s={19} /></Slot>)}
          <Divider $m={2} />
          {["frz", "off", "lock", "unlock"].map((k) => <Slot key={k}><LayerIcon kind={k} s={19} /></Slot>)}
        </Toolbar>
        <Toolbar $w={580}>
          <Grip />
          <Combo $w={149} $pl={4}><Swatch $mr={3} />ByLayer<ComboArrow /></Combo>
          <Divider $m={3} />
          <Combo $w={159} $pl={3}><LineSample $w={60} />ByLayer<ComboArrow /></Combo>
          <Divider $m={3} />
          <Combo $w={124} $pl={4}><LineSample $w={34} />ByLayer<ComboArrow /></Combo>
          <Divider $m={3} />
          <Combo $w={119} $pl={8}>ByColor<ComboArrow /></Combo>
        </Toolbar>
      </ToolbarRow>

      <Body>
        <PaletteDock><Palette><PaletteDots /><PaletteLabel>Properties</PaletteLabel></Palette></PaletteDock>
        <Main>
          <ViewRow>
            <Drawing />
            <VScroll><Arrow $d="up" $m="7px 0 0" /><Thumb $v $m="76px 2px 0 0" /><Arrow $d="down" $m="auto 0 6px" /></VScroll>
          </ViewRow>
          <TabRow>
            {["M3 2v8M9 2v8L4.500 6z", "M8.500 2v8L4 6z", "M3.500 2v8L8 6z", "M9 2v8M3 2v8l4.500-4z"].map((d) => <TabNav key={d}><I s={12}><path d={d} fill="#666" stroke="#666" strokeWidth=".8" /></I></TabNav>)}
            <TabStrip viewBox="0 0 218 16">
              <path d="M0 0H52L47 14.500H6Z" fill="#000" /><path d="M52 0L46 14.500H208L215 0" fill="#f4f4f4" stroke="#555" />
              <text x="12" y="12" fill="#fff" fontSize="12" fontFamily="Liberation Sans, sans-serif" textLength="29" lengthAdjust="spacingAndGlyphs">Model</text>
              <text x="58" y="12" fill="#111" fontSize="12.500" fontFamily="Liberation Sans, sans-serif" textLength="145" lengthAdjust="spacingAndGlyphs">A0_CU_SA_ARC_WD_00_R5</text>
            </TabStrip>
            <HScroll><SplitGrip /><Arrow $d="left" /><Thumb $m="0 0 0 182px" /><Arrow $d="right" $m="0 0 0 226px" /></HScroll>
          </TabRow>
          <CommandArea>
            <CommandSide>
              <I w={18} h={6}><path d="M1 1.500h16M1 4.500h16" stroke="#aaa" strokeWidth="1.500" strokeDasharray="1.500 1" /></I>
              <I w={16} h={22}><path d="M4 8l8 8m0-8l-8 8" stroke="#f4f4f4" strokeWidth="2.200" /></I>
              <I s={15}><path d="M5 7l7 7" stroke="#f4f4f4" strokeWidth="2.600" /><path d="M3 5.500a3 3 0 1 0 4-2.500" stroke="#f4f4f4" strokeWidth="2" /></I>
            </CommandSide>
            <CommandBody>
              <History>Select objects on the layer(s) to be isolated or [Settings]: 1 found, 2 total</History>
              <Prompt>
                <LayerIcon kind="iso" s={18} /><Caretlet c="#888" />
                <Command>LAYISO</Command>Select objects on the layer(s) to be isolated or [<Option><em>S</em>ettings</Option>]:<Caret />
              </Prompt>
            </CommandBody>
          </CommandArea>
        </Main>
      </Body>

      <StatusBar>
        <Coords>913938.0706, 1017798.1680, 0.0000</Coords>
        {statusIcons.map((ic, i) => <StatusButton key={i} $on={i >= 11 && i <= 13}><I>{ic}</I></StatusButton>)}
        <StatusGap $w={429} />
        <StatusButton $w={45}>MODEL</StatusButton>
        <StatusButton><I><path d="M4.500 3.500h11v11h-11z" fill="#fff" stroke="#444" /><path d="M7.500 7v5h5z" stroke="#333" /><path d="M2 16.500h15" stroke="#555" /></I></StatusButton>
        <StatusButton><I><path d="M2.500 4.500h7v7h-7zM10.500 4.500h7v7h-7z" fill="#fff" stroke="#444" /><path d="M2 14.500h16" stroke="#555" strokeWidth="2" /></I></StatusButton>
        <StatusGap $w={12} />
        <StatusButton $w={51}><I s={18}><path d="M9 2L7 9l-5 6h3l4-3 4 3h3l-5-6z" fill="#fff" stroke="#333" /></I>1:1<I s={12}><path d="M3 3.500h7L6.500 7.500z" fill="#111" /></I></StatusButton>
        <StatusButton><I><path d="M9 2L7 9l-5 7h3l4-4 4 4" fill="#fff" stroke="#444" /><circle cx="14" cy="11" r="3" fill="#ffc254" stroke="#c97a10" /><path d="M13 14h2.500v3H13z" fill="#c97a10" /></I></StatusButton>
        <StatusButton><I><path d="M10 3L8 9l-5 7h3l4-4 4 4h3l-5-7zM4 4h5l-3 5" fill="#bbb" stroke="#8a8a8a" /></I></StatusButton>
        <StatusGap $w={6} />
        <StatusButton><I><circle cx="10" cy="9.500" r="6" fill="#f5f5f5" stroke="#444" strokeWidth="1.300" /><circle cx="10" cy="9.500" r="7.300" stroke="#555" strokeWidth="1.500" strokeDasharray="2.500 3.200" /><circle cx="10" cy="9.500" r="2.500" stroke="#444" fill="#ccc" /><path d="M18 14v4h-4z" fill="#111" /></I></StatusButton>
        <StatusButton><I><path d="M11.500 9V6c0-3.500 5.500-3.500 5.500 0v2" stroke="#333" strokeWidth="1.500" /><rect x="3.500" y="9.500" width="9" height="7.500" fill="#fff" stroke="#222" /><path d="M8 12v3" stroke="#222" /></I></StatusButton>
        <StatusButton><I><rect x="2.500" y="4.500" width="12" height="6" fill="#7b8797" stroke="#333b47" /><path d="M4.500 2v2M7.500 2v2M10.500 2v2M4.500 11v2M7.500 11v2M10.500 11v2" stroke="#444" /><circle cx="15" cy="12" r="2.800" fill="#ffc254" stroke="#c97a10" /><path d="M14 15h2.500v3H14z" fill="#c97a10" /></I></StatusButton>
        <Tray>
          <I s={18}><path d="M2 8l7-5 6 3-7 4z" fill="#9ec6e4" stroke="#33658d" /><rect x="8.500" y="8.500" width="7" height="8" fill="#fff" stroke="#3b6ea0" /><path d="M10 11h4M10 13.500h4" stroke="#3b6ea0" /></I>
          <I s={18}><path d="M2 2h10l3 3v6H2z" fill="#3a78b4" stroke="#234" /><path d="M2 11h11v4H2z" fill="#f7d64a" stroke="#654" /><path d="M8 12l3.500 4L17 9" stroke="#2cab20" strokeWidth="2.300" /></I>
          <BulbIcon s={17} />
        </Tray>
        <StatusButton $w={15}><I s={10}><path d="M1.500 4h7L5 8z" fill="#111" /></I></StatusButton>
        <StatusButton $w={20}><I s={16}><path d="M1.500 2.500h12v11h-12z" fill="#fff" stroke="#333b47" /><path d="M1.500 4h12" stroke="#5a6b80" strokeWidth="2.500" /></I></StatusButton>
      </StatusBar>
    </Window>
  );
}
